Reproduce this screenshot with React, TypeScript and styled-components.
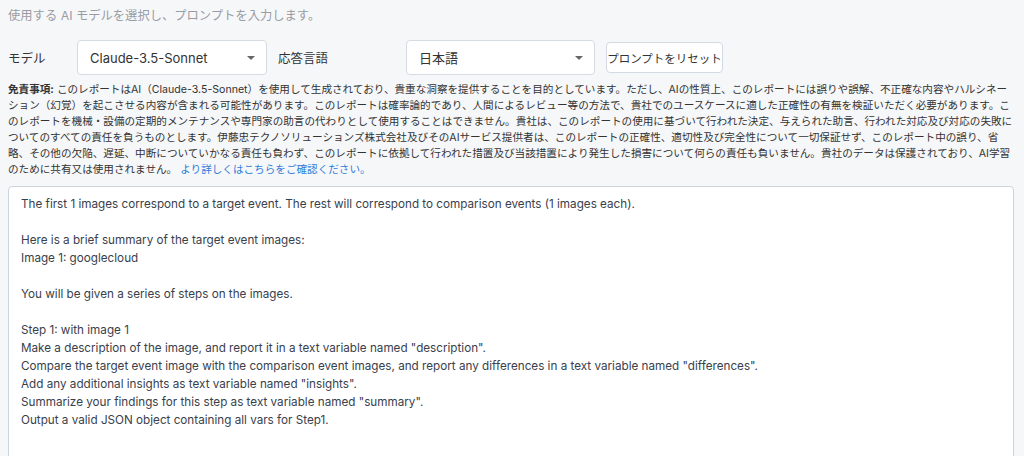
import React from 'react';
import styled, { createGlobalStyle } from 'styled-components';

const GlobalStyle = createGlobalStyle`
    body {
        margin: 0;
        background-color: #f6f7f9;
        font-family: "Inter", "Noto Sans CJK JP", sans-serif;
        color: #333;
    }
`;

const Page = styled.div`
    padding: 8px 8px 0 8px;
    display: flex;
    flex-direction: column;
`;

const Intro = styled.div`
    font-size: 12.3px;
    line-height: 16px;
    color: #999ca3;
`;

const SettingsRow = styled.div`
    display: flex;
    align-items: center;
    margin-top: 16px;
    height: 35px;
`;

const Label = styled.span<{ $width: number }>`
    width: ${props => props.$width}px;
    font-size: 12.5px;
    color: #333;
    flex-shrink: 0;
`;

const SelectBox = styled.div<{ $width: number }>`
    box-sizing: border-box;
    width: ${props => props.$width}px;
    height: 35px;
    display: flex;
    align-items: center;
    justify-content: space-between;
    padding: 0 11px 0 12px;
    background-color: #fff;
    border: 1px solid #d5dbe3;
    border-radius: 4px;
    font-size: 13px;
    color: #333;
    margin-right: 11px;
    flex-shrink: 0;
`;

const Caret = styled.span`
    width: 0;
    height: 0;
    border-left: 4px solid transparent;
    border-right: 4px solid transparent;
    border-top: 4px solid #666;
`;

const ResetButton = styled.button`
    box-sizing: border-box;
    width: 117px;
    height: 31px;
    padding: 0;
    background-color: #fff;
    border: 1px solid #d3dae3;
    border-radius: 4px;
    font-family: inherit;
    font-size: 11.5px;
    color: #333;
    white-space: nowrap;
`;

const Disclaimer = styled.p`
    margin: 7px 0 0 0;
    font-size: 10.6px;
    line-height: 16px;
    color: #333;
`;

const DisclaimerTitle = styled.strong`
    font-weight: 700;
`;

const MoreLink = styled.a`
    color: #2f7ddb;
    text-decoration: none;
`;

const PromptArea = styled.textarea`
    box-sizing: border-box;
    margin-top: 8px;
    width: 1006px;
    height: 300px;
    padding: 8px 12px;
    background-color: #fff;
    border: 1px solid #ccd4de;
    border-radius: 4px;
    font-family: "Inter", "Noto Sans CJK JP", sans-serif;
    font-size: 11.7px;
    line-height: 18px;
    color: #39414c;
    resize: none;
    outline: none;
    overflow: hidden;
`;

const promptText = `The first 1 images correspond to a target event. The rest will correspond to comparison events (1 images each).

Here is a brief summary of the target event images:
Image 1: googlecloud

You will be given a series of steps on the images.

Step 1: with image 1
Make a description of the image, and report it in a text variable named "description".
Compare the target event image with the comparison event images, and report any differences in a text variable named "differences".
Add any additional insights as text variable named "insights".
Summarize your findings for this step as text variable named "summary".
Output a valid JSON object containing all vars for Step1.
`;

export default function App() {
    return (
        <>
            <GlobalStyle />
            <Page>
                <Intro>使用する AI モデルを選択し、プロンプトを入力します。</Intro>
                <SettingsRow>
                    <Label $width={69}>モデル</Label>
                    <SelectBox $width={190}>
                        Claude-3.5-Sonnet
                        <Caret />
                    </SelectBox>
                    <Label $width={128}>応答言語</Label>
                    <SelectBox $width={189}>
                        日本語
                        <Caret />
                    </SelectBox>
                    <ResetButton>プロンプトをリセット</ResetButton>
                </SettingsRow>
                <Disclaimer>
                    <DisclaimerTitle>免責事項:</DisclaimerTitle> このレポートはAI（Claude-3.5-Sonnet）を使用して生成されており、貴重な洞察を提供することを目的としています。ただし、AIの性質上、このレポートには誤りや誤解、不正確な内容やハルシネーション（幻覚）を起こさせる内容が含まれる可能性があります。このレポートは確率論的であり、人間によるレビュー等の方法で、貴社でのユースケースに適した正確性の有無を検証いただく必要があります。このレポートを機械・設備の定期的メンテナンスや専門家の助言の代わりとして使用することはできません。貴社は、このレポートの使用に基づいて行われた決定、与えられた助言、行われた対応及び対応の失敗についてのすべての責任を負うものとします。伊藤忠テクノソリューションズ株式会社及びそのAIサービス提供者は、このレポートの正確性、適切性及び完全性について一切保証せず、このレポート中の誤り、省略、その他の欠陥、遅延、中断についていかなる責任も負わず、このレポートに依拠して行われた措置及び当該措置により発生した損害について何らの責任も負いません。貴社のデータは保護されており、AI学習のために共有又は使用されません。 <MoreLink href="#">より詳しくはこちらをご確認ください。</MoreLink>
                </Disclaimer>
                <PromptArea readOnly defaultValue={promptText} />
            </Page>
        </>
    );
}
